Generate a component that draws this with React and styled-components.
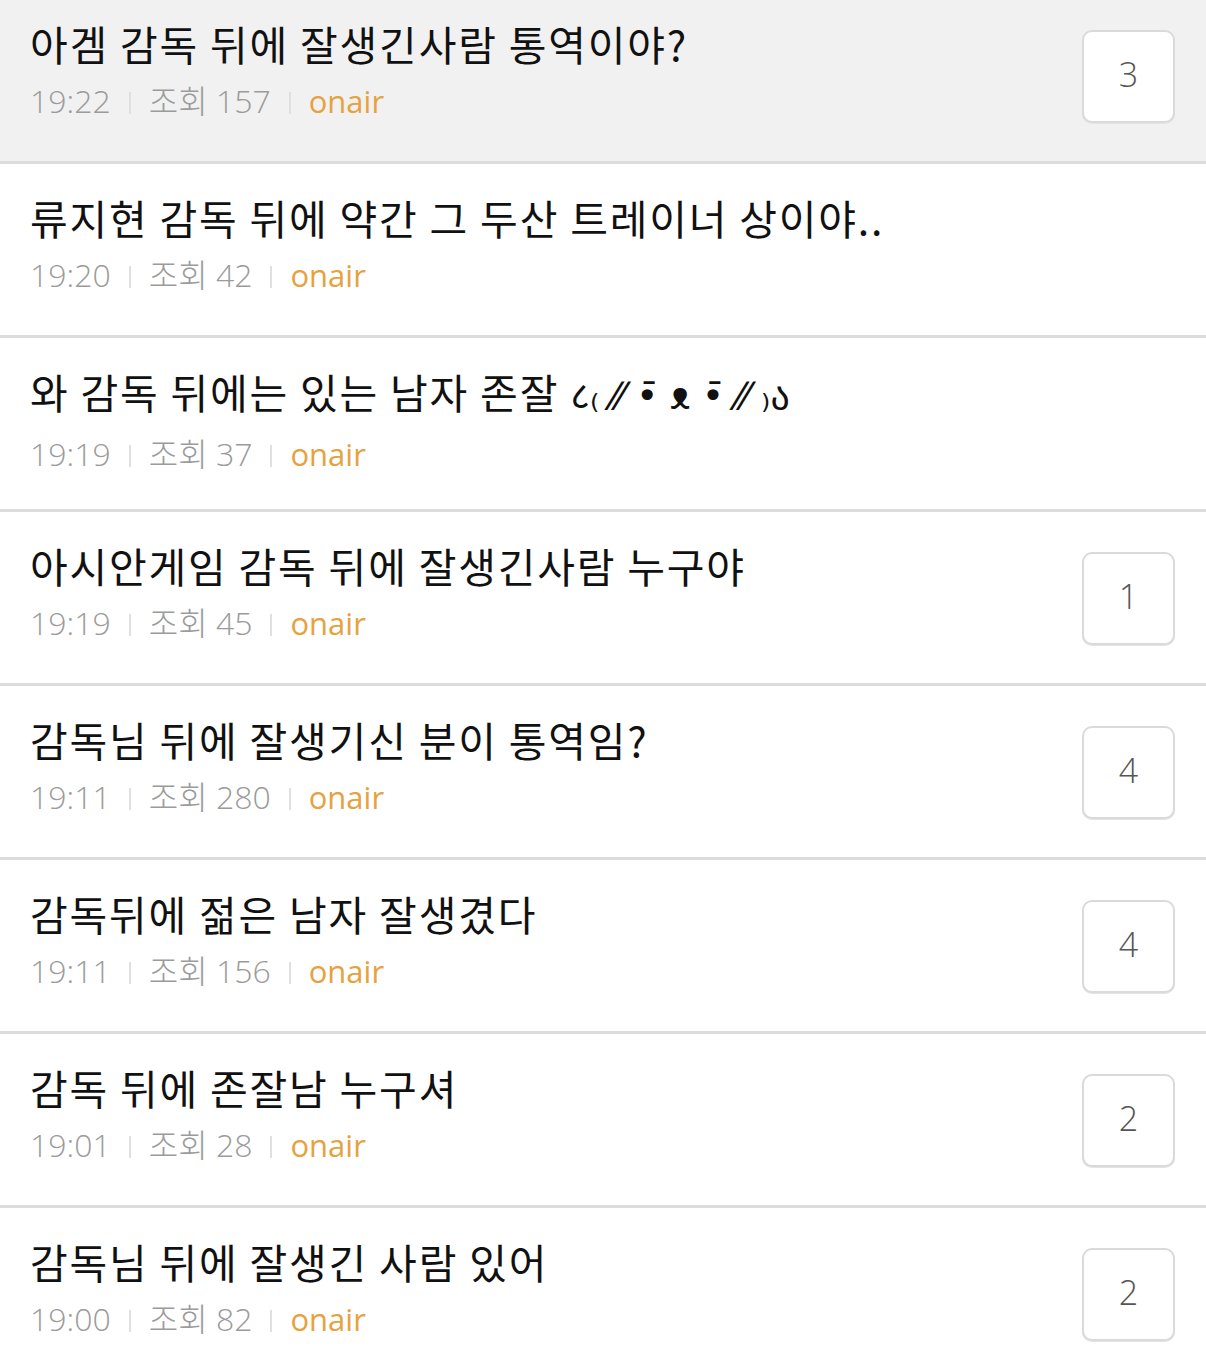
import React from "react";
import styled, { createGlobalStyle } from "styled-components";

const GlobalStyle = createGlobalStyle`
  html, body {
    margin: 0;
    padding: 0;
    background: #fff;
  }
  body {
    font-family: "Noto Sans", "Noto Sans CJK KR", sans-serif;
    -webkit-font-smoothing: antialiased;
  }
`;

const List = styled.ul`
  list-style: none;
  margin: -10px 0 0;
  padding: 0;
  width: 1206px;
  overflow: hidden;
`;

const Item = styled.li`
  display: flex;
  align-items: flex-start;
  justify-content: space-between;
  height: 171px;
  box-sizing: content-box;
  padding: 0 31px 0 30px;
  background: ${props => (props.active ? "#f1f1f1" : "#fff")};
  border-bottom: 3px solid #dcdcdc;
`;

const Body = styled.div`
  display: flex;
  flex-direction: column;
  padding-top: 23px;
  min-width: 0;
`;

const Title = styled.p`
  margin: 0;
  font-family: "Noto Sans CJK KR", "Noto Sans", sans-serif;
  font-size: 41px;
  line-height: 60px;
  letter-spacing: 1.8px;
  color: #111;
  white-space: nowrap;
`;

const Kaomoji = styled.span`
  font-family: "DejaVu Sans", "Noto Sans", sans-serif;
  font-size: 38px;
  letter-spacing: 0;
`;

const Meta = styled.div`
  display: flex;
  align-items: center;
  margin-top: 6px;
  font-family: "Open Sans", "Noto Sans", "Noto Sans CJK KR", sans-serif;
  font-size: 32px;
  font-weight: 300;
  line-height: 44px;
  color: #9b9b9b;
`;

const Divider = styled.span`
  display: block;
  width: 2px;
  height: 22px;
  margin: 4px 18px 0;
  background: #e0e0e0;
`;

const Board = styled.span`
  color: #e6a23e;
  font-weight: 400;
  font-size: 31px;
`;

const Count = styled.div`
  flex: none;
  display: flex;
  align-items: center;
  justify-content: center;
  width: 89px;
  height: 83px;
  padding-bottom: 6px;
  margin-top: 40px;
  border: 2px solid #dadada;
  border-radius: 10px;
  box-shadow: 0 1px 0 #e4e4e4;
  background: #fff;
  font-family: "Open Sans", "Noto Sans", sans-serif;
  font-size: 34px;
  font-weight: 300;
  color: #555;
`;

const posts = [
  { title: "아겜 감독 뒤에 잘생긴사람 통역이야?", time: "19:22", views: 157, comments: 3 },
  { title: "류지현 감독 뒤에 약간 그 두산 트레이너 상이야..", time: "19:20", views: 42 },
  {
    title: "와 감독 뒤에는 있는 남자 존잘 ",
    face: "८₍ ⁄⁄ •̄ ᴥ •̄ ⁄⁄ ₎ა",
    time: "19:19",
    views: 37
  },
  { title: "아시안게임 감독 뒤에 잘생긴사람 누구야", time: "19:19", views: 45, comments: 1 },
  { title: "감독님 뒤에 잘생기신 분이 통역임?", time: "19:11", views: 280, comments: 4 },
  { title: "감독뒤에 젊은 남자 잘생겼다", time: "19:11", views: 156, comments: 4 },
  { title: "감독 뒤에 존잘남 누구셔", time: "19:01", views: 28, comments: 2 },
  { title: "감독님 뒤에 잘생긴 사람 있어", time: "19:00", views: 82, comments: 2 }
];

const App = () => (
  <>
    <GlobalStyle />
    <List>
      {posts.map((post, i) => (
        <Item key={i} active={i === 0}>
          <Body>
            <Title>
              {post.title}
              {post.face && <Kaomoji>{post.face}</Kaomoji>}
            </Title>
            <Meta>
              <span>{post.time}</span>
              <Divider />
              <span>조회 {post.views}</span>
              <Divider />
              <Board>onair</Board>
            </Meta>
          </Body>
          {post.comments && <Count>{post.comments}</Count>}
        </Item>
      ))}
    </List>
  </>
);

export default App;
